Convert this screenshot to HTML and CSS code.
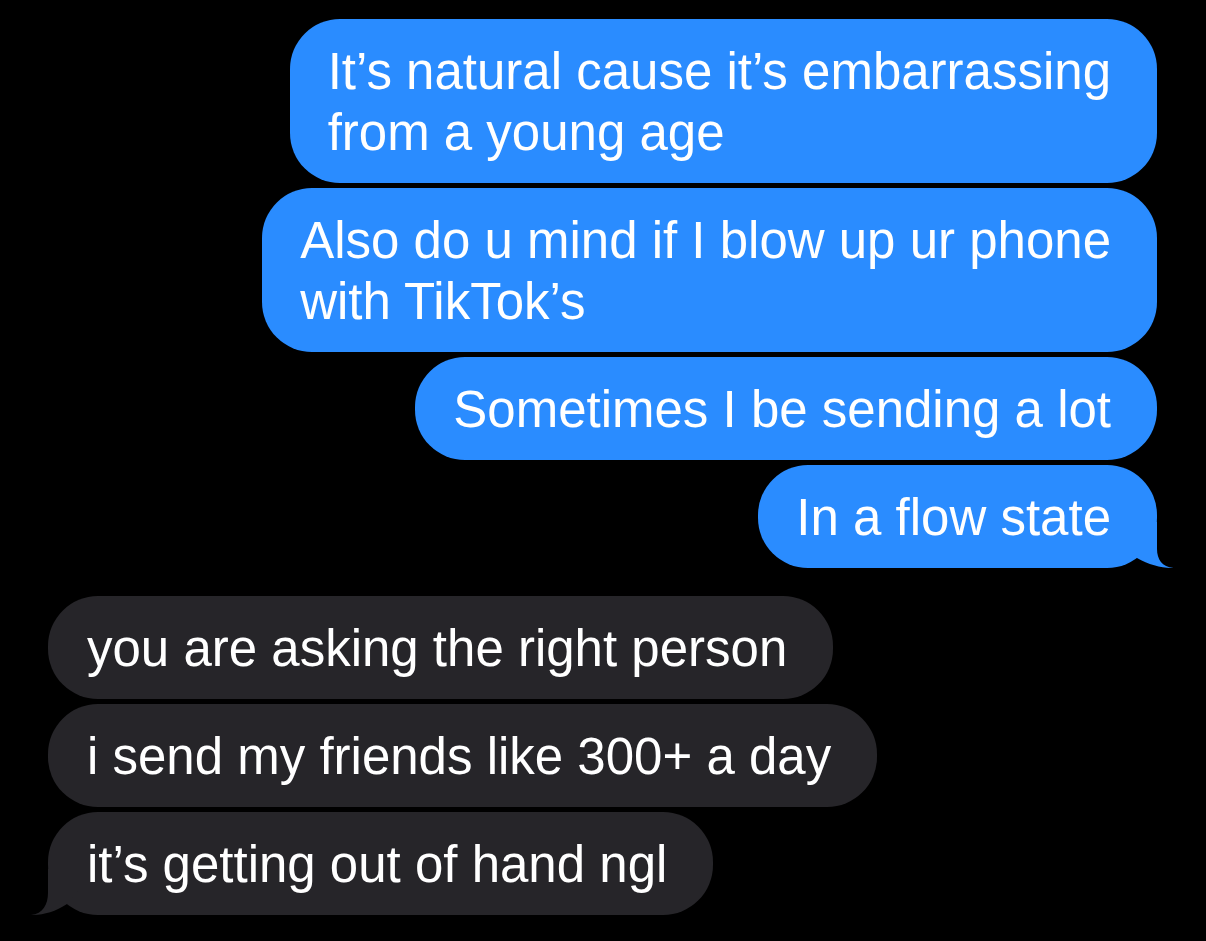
FILE: index.html
```html
<!DOCTYPE html>
<html lang="en">
<head>
<meta charset="utf-8">
<title>Messages</title>
<link rel="stylesheet" href="styles.css">
</head>
<body>
<main class="thread">
  <section class="group group-out">
    <div class="bubble out">It’s natural cause it’s embarrassing<br>from a young age</div>
    <div class="bubble out">Also do u mind if I blow up ur phone<br>with TikTok’s</div>
    <div class="bubble out">Sometimes I be sending a lot</div>
    <div class="bubble out last">In a flow state
      <svg class="tail tail-out" width="48" height="46" viewBox="0 0 48 46" aria-hidden="true"><path d="M30,0 L30,27 C30,37 35,45 46.5,46 C36,46.3 22,43 10,36 L0,22 L0,0 Z"/></svg>
    </div>
  </section>
  <section class="group group-in">
    <div class="bubble in">you are asking the right person</div>
    <div class="bubble in">i send my friends like 300+ a day</div>
    <div class="bubble in last">it’s getting out of hand ngl
      <svg class="tail tail-in" width="48" height="46" viewBox="0 0 48 46" aria-hidden="true"><path d="M30,0 L30,24 C30,35 35,45 47,46 C36,46.3 23,43 11,35 L0,22 L0,0 Z"/></svg>
    </div>
  </section>
</main>
</body>
</html>
```

FILE: styles.css
```css
html, body {
  margin: 0;
  background: #000;
}

body {
  width: 1206px;
  height: 941px;
  overflow: hidden;
  font-family: "Liberation Sans", Arial, sans-serif;
  color: #fff;
}

.thread {
  display: flex;
  flex-direction: column;
  gap: 28px;
  padding: 19px 49px 0 48px;
}

.group {
  display: flex;
  flex-direction: column;
  gap: 5px;
}

.group-out {
  align-items: flex-end;
}

.group-in {
  align-items: flex-start;
}

.bubble {
  position: relative;
  box-sizing: border-box;
  width: fit-content;
  padding: 22px 44px 20px 38px;
  border-radius: 50px;
  font-size: 51px;
  line-height: 61px;
  white-space: nowrap;
}

.bubble.out {
  background: #2a8cff;
  padding-left: 38px;
  padding-right: 46px;
}

.bubble.in {
  background: #262529;
  padding-left: 39px;
  padding-right: 46px;
}

.tail {
  position: absolute;
  bottom: 0;
  display: block;
}

.tail-out {
  right: -18px;
  fill: #2a8cff;
}

.tail-in {
  left: -18px;
  fill: #262529;
  transform: scaleX(-1);
}
```
